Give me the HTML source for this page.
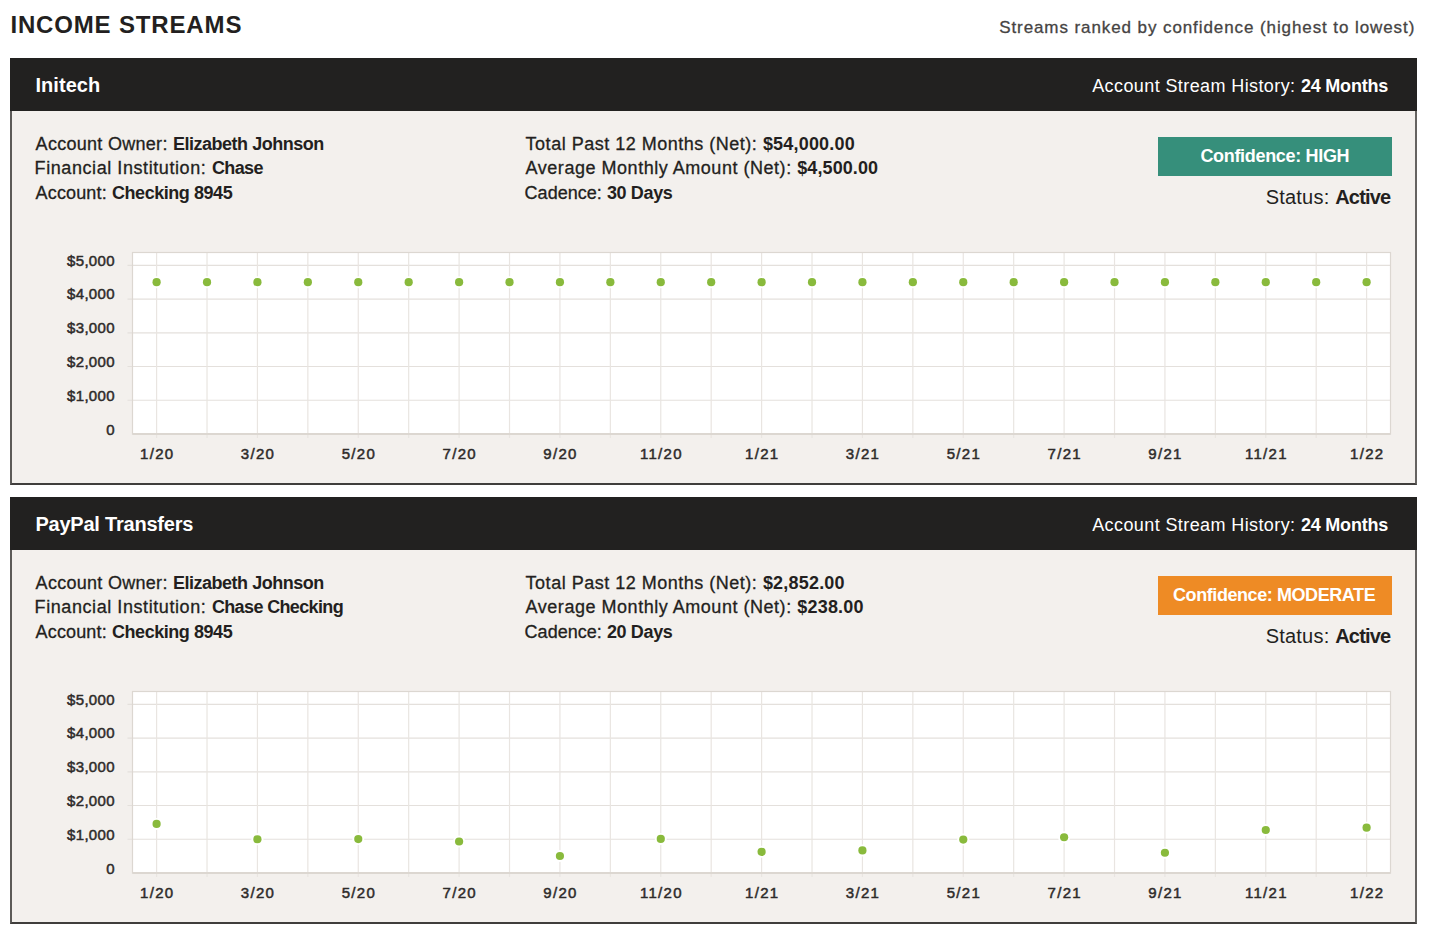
<!DOCTYPE html><html><head><meta charset="utf-8"><style>
*{margin:0;padding:0;box-sizing:border-box}
html,body{width:1430px;height:935px;background:#fff;overflow:hidden;font-family:"Liberation Sans", sans-serif}
b{font-weight:700}
.t{position:absolute;white-space:nowrap;line-height:1;}
.reg{-webkit-text-stroke:0.3px currentColor}

.ylab{position:absolute;left:0;width:114.8px;text-align:right;font-size:15px;line-height:15px;font-weight:400;-webkit-text-stroke:0.5px currentColor;color:#2e2b2a;white-space:nowrap;letter-spacing:0.3px}
.xlab{position:absolute;width:80px;text-align:center;font-size:15px;line-height:15px;font-weight:400;-webkit-text-stroke:0.5px currentColor;color:#2e2b2a;white-space:nowrap;letter-spacing:1.3px;text-indent:1.3px}
</style></head><body><div style="position:absolute;left:10px;top:58px;width:1407px;height:427px;background:#f3f0ed;border-left:2px solid #5c5a58;border-right:2px solid #656361;border-bottom:2px solid #403e3c;border-top:0"></div><div style="position:absolute;left:10px;top:58px;width:1407px;height:53px;background:#222120"></div><div style="position:absolute;left:1158px;top:137px;width:234px;height:39px;background:#368f7b"></div><div style="position:absolute;left:10px;top:497px;width:1407px;height:427px;background:#f3f0ed;border-left:2px solid #5c5a58;border-right:2px solid #656361;border-bottom:2px solid #403e3c;border-top:0"></div><div style="position:absolute;left:10px;top:497px;width:1407px;height:53px;background:#222120"></div><div style="position:absolute;left:1158px;top:576px;width:234px;height:39px;background:#ee8b25"></div><svg style="position:absolute;left:0;top:0" width="1430" height="935"><rect x="132.5" y="252.5" width="1258.0" height="181.5" fill="#fff"/><line x1="127.5" x2="1390.5" y1="400.26" y2="400.26" stroke="#e4e0dc" stroke-width="1.2"/><line x1="127.5" x2="1390.5" y1="366.52" y2="366.52" stroke="#e4e0dc" stroke-width="1.2"/><line x1="127.5" x2="1390.5" y1="332.78" y2="332.78" stroke="#e4e0dc" stroke-width="1.2"/><line x1="127.5" x2="1390.5" y1="299.03999999999996" y2="299.03999999999996" stroke="#e4e0dc" stroke-width="1.2"/><line x1="127.5" x2="1390.5" y1="265.3" y2="265.3" stroke="#e4e0dc" stroke-width="1.2"/><line x1="156.6" x2="156.6" y1="252.5" y2="438.0" stroke="#e9e5e1" stroke-width="1.2"/><line x1="207.01666666666665" x2="207.01666666666665" y1="252.5" y2="438.0" stroke="#e9e5e1" stroke-width="1.2"/><line x1="257.43333333333334" x2="257.43333333333334" y1="252.5" y2="438.0" stroke="#e9e5e1" stroke-width="1.2"/><line x1="307.85" x2="307.85" y1="252.5" y2="438.0" stroke="#e9e5e1" stroke-width="1.2"/><line x1="358.26666666666665" x2="358.26666666666665" y1="252.5" y2="438.0" stroke="#e9e5e1" stroke-width="1.2"/><line x1="408.6833333333333" x2="408.6833333333333" y1="252.5" y2="438.0" stroke="#e9e5e1" stroke-width="1.2"/><line x1="459.1" x2="459.1" y1="252.5" y2="438.0" stroke="#e9e5e1" stroke-width="1.2"/><line x1="509.51666666666665" x2="509.51666666666665" y1="252.5" y2="438.0" stroke="#e9e5e1" stroke-width="1.2"/><line x1="559.9333333333333" x2="559.9333333333333" y1="252.5" y2="438.0" stroke="#e9e5e1" stroke-width="1.2"/><line x1="610.35" x2="610.35" y1="252.5" y2="438.0" stroke="#e9e5e1" stroke-width="1.2"/><line x1="660.7666666666667" x2="660.7666666666667" y1="252.5" y2="438.0" stroke="#e9e5e1" stroke-width="1.2"/><line x1="711.1833333333333" x2="711.1833333333333" y1="252.5" y2="438.0" stroke="#e9e5e1" stroke-width="1.2"/><line x1="761.6" x2="761.6" y1="252.5" y2="438.0" stroke="#e9e5e1" stroke-width="1.2"/><line x1="812.0166666666667" x2="812.0166666666667" y1="252.5" y2="438.0" stroke="#e9e5e1" stroke-width="1.2"/><line x1="862.4333333333333" x2="862.4333333333333" y1="252.5" y2="438.0" stroke="#e9e5e1" stroke-width="1.2"/><line x1="912.85" x2="912.85" y1="252.5" y2="438.0" stroke="#e9e5e1" stroke-width="1.2"/><line x1="963.2666666666667" x2="963.2666666666667" y1="252.5" y2="438.0" stroke="#e9e5e1" stroke-width="1.2"/><line x1="1013.6833333333333" x2="1013.6833333333333" y1="252.5" y2="438.0" stroke="#e9e5e1" stroke-width="1.2"/><line x1="1064.1" x2="1064.1" y1="252.5" y2="438.0" stroke="#e9e5e1" stroke-width="1.2"/><line x1="1114.5166666666667" x2="1114.5166666666667" y1="252.5" y2="438.0" stroke="#e9e5e1" stroke-width="1.2"/><line x1="1164.9333333333332" x2="1164.9333333333332" y1="252.5" y2="438.0" stroke="#e9e5e1" stroke-width="1.2"/><line x1="1215.35" x2="1215.35" y1="252.5" y2="438.0" stroke="#e9e5e1" stroke-width="1.2"/><line x1="1265.7666666666664" x2="1265.7666666666664" y1="252.5" y2="438.0" stroke="#e9e5e1" stroke-width="1.2"/><line x1="1316.1833333333332" x2="1316.1833333333332" y1="252.5" y2="438.0" stroke="#e9e5e1" stroke-width="1.2"/><line x1="1366.6" x2="1366.6" y1="252.5" y2="438.0" stroke="#e9e5e1" stroke-width="1.2"/><rect x="132.5" y="252.5" width="1258.0" height="181.5" fill="none" stroke="#dcd7d1" stroke-width="1.2"/><line x1="132.5" x2="1390.5" y1="434.0" y2="434.0" stroke="#dcd7d1" stroke-width="2"/><circle cx="156.60" cy="282.17" r="6" fill="#fff"/><circle cx="156.60" cy="282.17" r="4.1" fill="#89ba3c"/><circle cx="207.02" cy="282.17" r="6" fill="#fff"/><circle cx="207.02" cy="282.17" r="4.1" fill="#89ba3c"/><circle cx="257.43" cy="282.17" r="6" fill="#fff"/><circle cx="257.43" cy="282.17" r="4.1" fill="#89ba3c"/><circle cx="307.85" cy="282.17" r="6" fill="#fff"/><circle cx="307.85" cy="282.17" r="4.1" fill="#89ba3c"/><circle cx="358.27" cy="282.17" r="6" fill="#fff"/><circle cx="358.27" cy="282.17" r="4.1" fill="#89ba3c"/><circle cx="408.68" cy="282.17" r="6" fill="#fff"/><circle cx="408.68" cy="282.17" r="4.1" fill="#89ba3c"/><circle cx="459.10" cy="282.17" r="6" fill="#fff"/><circle cx="459.10" cy="282.17" r="4.1" fill="#89ba3c"/><circle cx="509.52" cy="282.17" r="6" fill="#fff"/><circle cx="509.52" cy="282.17" r="4.1" fill="#89ba3c"/><circle cx="559.93" cy="282.17" r="6" fill="#fff"/><circle cx="559.93" cy="282.17" r="4.1" fill="#89ba3c"/><circle cx="610.35" cy="282.17" r="6" fill="#fff"/><circle cx="610.35" cy="282.17" r="4.1" fill="#89ba3c"/><circle cx="660.77" cy="282.17" r="6" fill="#fff"/><circle cx="660.77" cy="282.17" r="4.1" fill="#89ba3c"/><circle cx="711.18" cy="282.17" r="6" fill="#fff"/><circle cx="711.18" cy="282.17" r="4.1" fill="#89ba3c"/><circle cx="761.60" cy="282.17" r="6" fill="#fff"/><circle cx="761.60" cy="282.17" r="4.1" fill="#89ba3c"/><circle cx="812.02" cy="282.17" r="6" fill="#fff"/><circle cx="812.02" cy="282.17" r="4.1" fill="#89ba3c"/><circle cx="862.43" cy="282.17" r="6" fill="#fff"/><circle cx="862.43" cy="282.17" r="4.1" fill="#89ba3c"/><circle cx="912.85" cy="282.17" r="6" fill="#fff"/><circle cx="912.85" cy="282.17" r="4.1" fill="#89ba3c"/><circle cx="963.27" cy="282.17" r="6" fill="#fff"/><circle cx="963.27" cy="282.17" r="4.1" fill="#89ba3c"/><circle cx="1013.68" cy="282.17" r="6" fill="#fff"/><circle cx="1013.68" cy="282.17" r="4.1" fill="#89ba3c"/><circle cx="1064.10" cy="282.17" r="6" fill="#fff"/><circle cx="1064.10" cy="282.17" r="4.1" fill="#89ba3c"/><circle cx="1114.52" cy="282.17" r="6" fill="#fff"/><circle cx="1114.52" cy="282.17" r="4.1" fill="#89ba3c"/><circle cx="1164.93" cy="282.17" r="6" fill="#fff"/><circle cx="1164.93" cy="282.17" r="4.1" fill="#89ba3c"/><circle cx="1215.35" cy="282.17" r="6" fill="#fff"/><circle cx="1215.35" cy="282.17" r="4.1" fill="#89ba3c"/><circle cx="1265.77" cy="282.17" r="6" fill="#fff"/><circle cx="1265.77" cy="282.17" r="4.1" fill="#89ba3c"/><circle cx="1316.18" cy="282.17" r="6" fill="#fff"/><circle cx="1316.18" cy="282.17" r="4.1" fill="#89ba3c"/><circle cx="1366.60" cy="282.17" r="6" fill="#fff"/><circle cx="1366.60" cy="282.17" r="4.1" fill="#89ba3c"/><rect x="132.5" y="691.5" width="1258.0" height="181.5" fill="#fff"/><line x1="127.5" x2="1390.5" y1="839.26" y2="839.26" stroke="#e4e0dc" stroke-width="1.2"/><line x1="127.5" x2="1390.5" y1="805.52" y2="805.52" stroke="#e4e0dc" stroke-width="1.2"/><line x1="127.5" x2="1390.5" y1="771.78" y2="771.78" stroke="#e4e0dc" stroke-width="1.2"/><line x1="127.5" x2="1390.5" y1="738.04" y2="738.04" stroke="#e4e0dc" stroke-width="1.2"/><line x1="127.5" x2="1390.5" y1="704.3" y2="704.3" stroke="#e4e0dc" stroke-width="1.2"/><line x1="156.6" x2="156.6" y1="691.5" y2="877.0" stroke="#e9e5e1" stroke-width="1.2"/><line x1="207.01666666666665" x2="207.01666666666665" y1="691.5" y2="877.0" stroke="#e9e5e1" stroke-width="1.2"/><line x1="257.43333333333334" x2="257.43333333333334" y1="691.5" y2="877.0" stroke="#e9e5e1" stroke-width="1.2"/><line x1="307.85" x2="307.85" y1="691.5" y2="877.0" stroke="#e9e5e1" stroke-width="1.2"/><line x1="358.26666666666665" x2="358.26666666666665" y1="691.5" y2="877.0" stroke="#e9e5e1" stroke-width="1.2"/><line x1="408.6833333333333" x2="408.6833333333333" y1="691.5" y2="877.0" stroke="#e9e5e1" stroke-width="1.2"/><line x1="459.1" x2="459.1" y1="691.5" y2="877.0" stroke="#e9e5e1" stroke-width="1.2"/><line x1="509.51666666666665" x2="509.51666666666665" y1="691.5" y2="877.0" stroke="#e9e5e1" stroke-width="1.2"/><line x1="559.9333333333333" x2="559.9333333333333" y1="691.5" y2="877.0" stroke="#e9e5e1" stroke-width="1.2"/><line x1="610.35" x2="610.35" y1="691.5" y2="877.0" stroke="#e9e5e1" stroke-width="1.2"/><line x1="660.7666666666667" x2="660.7666666666667" y1="691.5" y2="877.0" stroke="#e9e5e1" stroke-width="1.2"/><line x1="711.1833333333333" x2="711.1833333333333" y1="691.5" y2="877.0" stroke="#e9e5e1" stroke-width="1.2"/><line x1="761.6" x2="761.6" y1="691.5" y2="877.0" stroke="#e9e5e1" stroke-width="1.2"/><line x1="812.0166666666667" x2="812.0166666666667" y1="691.5" y2="877.0" stroke="#e9e5e1" stroke-width="1.2"/><line x1="862.4333333333333" x2="862.4333333333333" y1="691.5" y2="877.0" stroke="#e9e5e1" stroke-width="1.2"/><line x1="912.85" x2="912.85" y1="691.5" y2="877.0" stroke="#e9e5e1" stroke-width="1.2"/><line x1="963.2666666666667" x2="963.2666666666667" y1="691.5" y2="877.0" stroke="#e9e5e1" stroke-width="1.2"/><line x1="1013.6833333333333" x2="1013.6833333333333" y1="691.5" y2="877.0" stroke="#e9e5e1" stroke-width="1.2"/><line x1="1064.1" x2="1064.1" y1="691.5" y2="877.0" stroke="#e9e5e1" stroke-width="1.2"/><line x1="1114.5166666666667" x2="1114.5166666666667" y1="691.5" y2="877.0" stroke="#e9e5e1" stroke-width="1.2"/><line x1="1164.9333333333332" x2="1164.9333333333332" y1="691.5" y2="877.0" stroke="#e9e5e1" stroke-width="1.2"/><line x1="1215.35" x2="1215.35" y1="691.5" y2="877.0" stroke="#e9e5e1" stroke-width="1.2"/><line x1="1265.7666666666664" x2="1265.7666666666664" y1="691.5" y2="877.0" stroke="#e9e5e1" stroke-width="1.2"/><line x1="1316.1833333333332" x2="1316.1833333333332" y1="691.5" y2="877.0" stroke="#e9e5e1" stroke-width="1.2"/><line x1="1366.6" x2="1366.6" y1="691.5" y2="877.0" stroke="#e9e5e1" stroke-width="1.2"/><rect x="132.5" y="691.5" width="1258.0" height="181.5" fill="none" stroke="#dcd7d1" stroke-width="1.2"/><line x1="132.5" x2="1390.5" y1="873.0" y2="873.0" stroke="#dcd7d1" stroke-width="2"/><circle cx="156.60" cy="823.91" r="6" fill="#fff"/><circle cx="156.60" cy="823.91" r="4.1" fill="#89ba3c"/><circle cx="257.43" cy="839.26" r="6" fill="#fff"/><circle cx="257.43" cy="839.26" r="4.1" fill="#89ba3c"/><circle cx="358.27" cy="839.09" r="6" fill="#fff"/><circle cx="358.27" cy="839.09" r="4.1" fill="#89ba3c"/><circle cx="459.10" cy="841.49" r="6" fill="#fff"/><circle cx="459.10" cy="841.49" r="4.1" fill="#89ba3c"/><circle cx="559.93" cy="856.00" r="6" fill="#fff"/><circle cx="559.93" cy="856.00" r="4.1" fill="#89ba3c"/><circle cx="660.77" cy="838.92" r="6" fill="#fff"/><circle cx="660.77" cy="838.92" r="4.1" fill="#89ba3c"/><circle cx="761.60" cy="851.81" r="6" fill="#fff"/><circle cx="761.60" cy="851.81" r="4.1" fill="#89ba3c"/><circle cx="862.43" cy="850.39" r="6" fill="#fff"/><circle cx="862.43" cy="850.39" r="4.1" fill="#89ba3c"/><circle cx="963.27" cy="839.60" r="6" fill="#fff"/><circle cx="963.27" cy="839.60" r="4.1" fill="#89ba3c"/><circle cx="1064.10" cy="837.24" r="6" fill="#fff"/><circle cx="1064.10" cy="837.24" r="4.1" fill="#89ba3c"/><circle cx="1164.93" cy="852.76" r="6" fill="#fff"/><circle cx="1164.93" cy="852.76" r="4.1" fill="#89ba3c"/><circle cx="1265.77" cy="830.02" r="6" fill="#fff"/><circle cx="1265.77" cy="830.02" r="4.1" fill="#89ba3c"/><circle cx="1366.60" cy="827.69" r="6" fill="#fff"/><circle cx="1366.60" cy="827.69" r="4.1" fill="#89ba3c"/></svg><div class="ylab" style="top:422.30px">0</div><div class="ylab" style="top:387.56px">$1,000</div><div class="ylab" style="top:353.82px">$2,000</div><div class="ylab" style="top:320.08px">$3,000</div><div class="ylab" style="top:286.34px">$4,000</div><div class="ylab" style="top:252.60px">$5,000</div><div class="xlab" style="left:116.60px;top:445.80px">1/20</div><div class="xlab" style="left:217.43px;top:445.80px">3/20</div><div class="xlab" style="left:318.27px;top:445.80px">5/20</div><div class="xlab" style="left:419.10px;top:445.80px">7/20</div><div class="xlab" style="left:519.93px;top:445.80px">9/20</div><div class="xlab" style="left:620.77px;top:445.80px">11/20</div><div class="xlab" style="left:721.60px;top:445.80px">1/21</div><div class="xlab" style="left:822.43px;top:445.80px">3/21</div><div class="xlab" style="left:923.27px;top:445.80px">5/21</div><div class="xlab" style="left:1024.10px;top:445.80px">7/21</div><div class="xlab" style="left:1124.93px;top:445.80px">9/21</div><div class="xlab" style="left:1225.77px;top:445.80px">11/21</div><div class="xlab" style="left:1326.60px;top:445.80px">1/22</div><div class="ylab" style="top:861.30px">0</div><div class="ylab" style="top:826.56px">$1,000</div><div class="ylab" style="top:792.82px">$2,000</div><div class="ylab" style="top:759.08px">$3,000</div><div class="ylab" style="top:725.34px">$4,000</div><div class="ylab" style="top:691.60px">$5,000</div><div class="xlab" style="left:116.60px;top:884.80px">1/20</div><div class="xlab" style="left:217.43px;top:884.80px">3/20</div><div class="xlab" style="left:318.27px;top:884.80px">5/20</div><div class="xlab" style="left:419.10px;top:884.80px">7/20</div><div class="xlab" style="left:519.93px;top:884.80px">9/20</div><div class="xlab" style="left:620.77px;top:884.80px">11/20</div><div class="xlab" style="left:721.60px;top:884.80px">1/21</div><div class="xlab" style="left:822.43px;top:884.80px">3/21</div><div class="xlab" style="left:923.27px;top:884.80px">5/21</div><div class="xlab" style="left:1024.10px;top:884.80px">7/21</div><div class="xlab" style="left:1124.93px;top:884.80px">9/21</div><div class="xlab" style="left:1225.77px;top:884.80px">11/21</div><div class="xlab" style="left:1326.60px;top:884.80px">1/22</div><div class="t" style="left:10.40px;top:12.90px;font-size:24px;color:#231f20"><b style="letter-spacing:0.846px">INCOME STREAMS</b></div>
<div class="t" style="left:999.20px;top:18.70px;font-size:17px;color:#464443"><span class="reg" style="letter-spacing:0.911px">Streams ranked by confidence (highest to lowest)</span></div>
<div class="t" style="left:35.40px;top:75.40px;font-size:20px;color:#ffffff"><b style="letter-spacing:0.067px">Initech</b></div>
<div class="t" style="left:1092.20px;top:77.30px;font-size:18px;color:#ffffff"><span class="" style="letter-spacing:0.401px">Account Stream History: </span><b style="letter-spacing:-0.200px">24 Months</b></div>
<div class="t" style="left:35.60px;top:135.10px;font-size:18px;color:#231f20"><span class="reg" style="letter-spacing:0.289px">Account Owner: </span><b style="letter-spacing:-0.488px">Elizabeth Johnson</b></div>
<div class="t" style="left:34.60px;top:159.20px;font-size:18px;color:#231f20"><span class="reg" style="letter-spacing:0.574px">Financial Institution: </span><b style="letter-spacing:-0.625px">Chase</b></div>
<div class="t" style="left:35.60px;top:183.80px;font-size:18px;color:#231f20"><span class="reg" style="letter-spacing:0.150px">Account: </span><b style="letter-spacing:-0.450px">Checking 8945</b></div>
<div class="t" style="left:525.60px;top:135.10px;font-size:18px;color:#231f20"><span class="reg" style="letter-spacing:0.507px">Total Past 12 Months (Net): </span><b style="letter-spacing:0.189px">$54,000.00</b></div>
<div class="t" style="left:525.60px;top:159.20px;font-size:18px;color:#231f20"><span class="reg" style="letter-spacing:0.527px">Average Monthly Amount (Net): </span><b style="letter-spacing:0.100px">$4,500.00</b></div>
<div class="t" style="left:524.60px;top:183.80px;font-size:18px;color:#231f20"><span class="reg" style="letter-spacing:0.026px">Cadence: </span><b style="letter-spacing:-0.350px">30 Days</b></div>
<div class="t" style="left:1200.40px;top:146.80px;font-size:18px;color:#ffffff"><b style="letter-spacing:-0.320px">Confidence: HIGH</b></div>
<div class="t" style="left:1265.70px;top:186.50px;font-size:20px;color:#231f20"><span class="" style="letter-spacing:0.211px">Status: </span><b style="letter-spacing:-0.800px">Active</b></div>
<div class="t" style="left:35.40px;top:514.40px;font-size:20px;color:#ffffff"><b style="letter-spacing:-0.213px">PayPal Transfers</b></div>
<div class="t" style="left:1092.20px;top:516.30px;font-size:18px;color:#ffffff"><span class="" style="letter-spacing:0.401px">Account Stream History: </span><b style="letter-spacing:-0.200px">24 Months</b></div>
<div class="t" style="left:35.60px;top:574.10px;font-size:18px;color:#231f20"><span class="reg" style="letter-spacing:0.289px">Account Owner: </span><b style="letter-spacing:-0.488px">Elizabeth Johnson</b></div>
<div class="t" style="left:34.60px;top:598.20px;font-size:18px;color:#231f20"><span class="reg" style="letter-spacing:0.574px">Financial Institution: </span><b style="letter-spacing:-0.631px">Chase Checking</b></div>
<div class="t" style="left:35.60px;top:622.80px;font-size:18px;color:#231f20"><span class="reg" style="letter-spacing:0.150px">Account: </span><b style="letter-spacing:-0.450px">Checking 8945</b></div>
<div class="t" style="left:525.60px;top:574.10px;font-size:18px;color:#231f20"><span class="reg" style="letter-spacing:0.507px">Total Past 12 Months (Net): </span><b style="letter-spacing:0.200px">$2,852.00</b></div>
<div class="t" style="left:525.60px;top:598.20px;font-size:18px;color:#231f20"><span class="reg" style="letter-spacing:0.527px">Average Monthly Amount (Net): </span><b style="letter-spacing:0.217px">$238.00</b></div>
<div class="t" style="left:524.60px;top:622.80px;font-size:18px;color:#231f20"><span class="reg" style="letter-spacing:0.026px">Cadence: </span><b style="letter-spacing:-0.350px">20 Days</b></div>
<div class="t" style="left:1173.00px;top:585.80px;font-size:18px;color:#ffffff"><b style="letter-spacing:-0.421px">Confidence: MODERATE</b></div>
<div class="t" style="left:1265.70px;top:625.50px;font-size:20px;color:#231f20"><span class="" style="letter-spacing:0.211px">Status: </span><b style="letter-spacing:-0.800px">Active</b></div>
</body></html>
